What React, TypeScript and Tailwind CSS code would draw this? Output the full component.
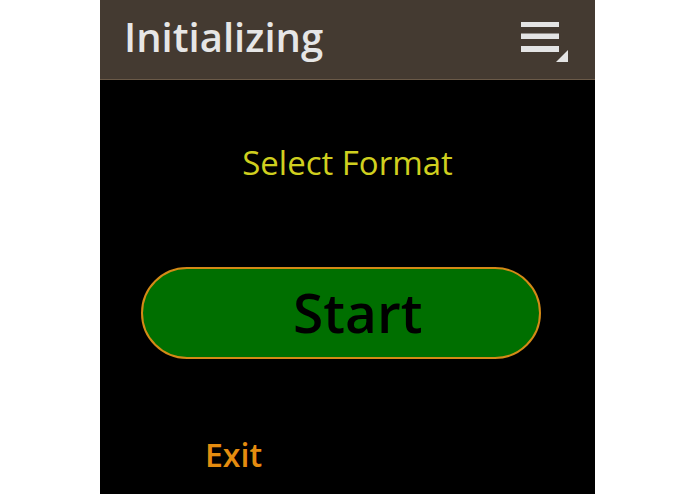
import React from "react";

export default function App() {
  return (
    <div className="w-[695px] h-[494px] bg-white flex justify-center overflow-hidden">
      <div
        className="w-[495px] h-[494px] bg-black flex flex-col"
        style={{ fontFamily: '"Open Sans", "Noto Sans", sans-serif' }}
      >
        <div className="h-[80px] shrink-0 bg-[#443a31] border-b border-[#6b5a48] flex items-start justify-between pl-[24px] pr-[26px]">
          <div className="mt-[17px] text-[40px] leading-none font-semibold text-[#e6e6e6]">
            Initializing
          </div>
          <svg width="48" height="42" viewBox="0 0 48 42" className="mt-[21px]">
            <rect x="0" y="1" width="38" height="5" fill="#e4e4e4" />
            <rect x="0" y="12.5" width="38" height="5.5" fill="#e4e4e4" />
            <rect x="0" y="25" width="38" height="6" fill="#e4e4e4" />
            <polygon points="35,41 47,41 47,29" fill="#e4e4e4" />
          </svg>
        </div>
        <div className="flex flex-col">
          <div className="mt-[66px] text-center text-[33px] leading-none text-[#cfcf1f]">
            Select Format
          </div>
          <div className="mt-[88px] ml-[41px] w-[400px] h-[92px] rounded-full border-2 border-[#d48a16] bg-[#006f00] flex items-center pl-[150px] pb-[3px]">
            <span className="text-[55px] leading-none font-semibold text-black">Start</span>
          </div>
          <div className="mt-[80px] ml-[105px] text-[32px] leading-none font-semibold text-[#e58c0f]">
            Exit
          </div>
        </div>
      </div>
    </div>
  );
}
